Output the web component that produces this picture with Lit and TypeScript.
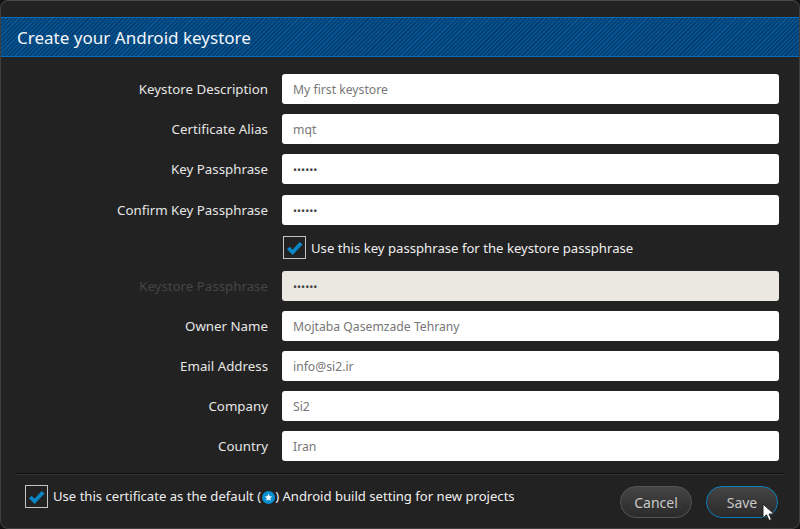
import { LitElement, html, css, svg } from "lit";
import { customElement } from "lit/decorators.js";

const check = svg`<svg class="tick" viewBox="0 0 22 22" width="21" height="21"><path d="M4.5 11.5 L9 16 L18 6.5" fill="none" stroke="#0a86c4" stroke-width="4"/></svg>`;

@customElement("app-root")
export class AppRoot extends LitElement {
  static styles = css`
    :host { display: block; width: 800px; height: 529px; background: #111; font-family: "Noto Sans", "Open Sans", sans-serif; overflow: hidden; }
    * { box-sizing: border-box; }
    .win { height: 529px; background: #222; border: 1px solid #3f3f3f; border-top: 1px solid #4a4a4a; border-radius: 8px; display: flex; flex-direction: column; padding-top: 16px; overflow: hidden; }
    .head { height: 40px; flex: none; border-top: 1px solid #0a6cb8; border-bottom: 1px solid #0a6cb8; background-color: #04477f; background-image: repeating-linear-gradient(135deg, #07538f 0 1.5px, #033f73 1.5px 3px); color: #f2f6fa; font-size: 17.05px; display: flex; align-items: center; padding-left: 16px; }
    .form { display: flex; flex-direction: column; padding: 17px 20px 0 0; }
    .row { display: flex; align-items: center; height: 30px; margin-bottom: 10px; }
    .row.wide { margin-bottom: 11px; }
    .label { width: 267px; text-align: right; color: #e6e6e6; font-size: 13.3px; flex: none; }
    .input { margin-left: 14px; flex: 1; height: 30px; background: #fff; border-radius: 3px; color: #777; font-size: 12.2px; display: flex; align-items: center; padding-left: 11px; }
    .dots { font-size: 10.8px; color: #444; }
    .dis .label { color: #454545; }
    .dis .input { background: #eae8e1; }
    .checkrow { display: flex; align-items: center; margin: 0 0 12px 282px; height: 23px; color: #efefef; font-size: 13.15px; gap: 5px; }
    .box { width: 23px; height: 23px; border: 1px solid #c4c4c4; display: flex; align-items: center; justify-content: center; flex: none; }
    .foot { margin: 2px 16px 0; border-top: 1px solid #0c0c0c; box-shadow: inset 0 1px 0 #333; display: flex; justify-content: space-between; padding: 11px 5px 0 8px; }
    .fcheck { display: flex; align-items: center; height: 23px; gap: 5px; color: #efefef; font-size: 13.1px; }
    .ftext { padding-bottom: 2px; }
    .star { display: inline-block; vertical-align: -3px; margin: 0 0.5px; }
    .btns { display: flex; gap: 14px; padding-top: 1px; }
    .btn { width: 72px; height: 32px; border-radius: 16px; background: linear-gradient(#454545, #2a2a2a); border: 1px solid #555; color: #c8c8c8; font-size: 14px; display: flex; align-items: center; justify-content: center; }
    .btn.primary { border-color: #0a7fb8; }
    .btnwrap { position: relative; }
    .cursor { position: absolute; left: 56px; top: 17px; }
  `;

  private row(label: string, value: string, cls = "", dots = false) {
    return html`<div class="row ${cls}"><div class="label">${label}</div><div class="input">${dots ? html`<span class="dots">••••••</span>` : value}</div></div>`;
  }

  render() {
    return html`<div class="win">
      <div class="head">Create your Android keystore</div>
      <div class="form">
        ${this.row("Keystore Description", "My first keystore")}
        ${this.row("Certificate Alias", "mqt")}
        ${this.row("Key Passphrase", "", "wide", true)}
        ${this.row("Confirm Key Passphrase", "", "wide", true)}
        <div class="checkrow"><span class="box">${check}</span><span>Use this key passphrase for the keystore passphrase</span></div>
        ${this.row("Keystore Passphrase", "", "dis", true)}
        ${this.row("Owner Name", "Mojtaba Qasemzade Tehrany")}
        ${this.row("Email Address", "info@si2.ir")}
        ${this.row("Company", "Si2")}
        ${this.row("Country", "Iran")}
      </div>
      <div class="foot">
        <div class="fcheck"><span class="box">${check}</span><span class="ftext">Use this certificate as the default (<svg class="star" width="13" height="13" viewBox="0 0 13 13"><circle cx="6.5" cy="6.5" r="6.5" fill="#0a8fd0"/><path d="M6.5 2.6 7.6 5.2 10.3 5.4 8.2 7.1 8.9 9.8 6.5 8.4 4.1 9.8 4.8 7.1 2.7 5.4 5.4 5.2Z" fill="#fff"/></svg>) Android build setting for new projects</span></div>
        <div class="btns">
          <div class="btn">Cancel</div>
          <div class="btnwrap"><div class="btn primary">Save</div>
            <svg class="cursor" width="16" height="20" viewBox="0 0 16 20"><path d="M1 1V15L4.5 11.8 7 17.5 9.5 16.4 7 11H12Z" fill="#fff" stroke="#222" stroke-width="1"/></svg>
          </div>
        </div>
      </div>
    </div>`;
  }
}
